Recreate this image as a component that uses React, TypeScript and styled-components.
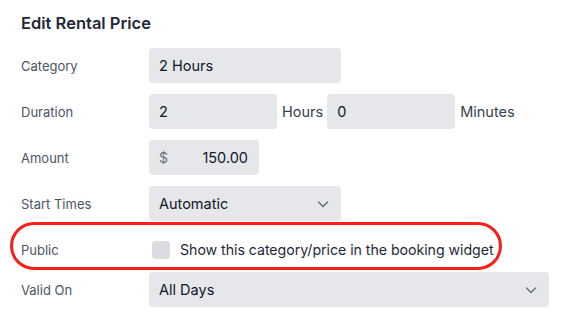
import { createGlobalStyle, styled } from 'styled-components';

const GlobalStyle = createGlobalStyle`
  body {
    margin: 0;
    background: #fff;
    font-family: Inter, 'Noto Sans', sans-serif;
    -webkit-font-smoothing: antialiased;
  }
`;

export default function App() {
  return (
    <>
      <GlobalStyle />
      <Panel>
        <Title>Edit Rental Price</Title>
        <Row>
          <Label>Category</Label>
          <Field $width={192}>2 Hours</Field>
        </Row>
        <Row>
          <Label>Duration</Label>
          <Field $width={128}>2</Field>
          <Unit>Hours</Unit>
          <Field $width={128}>0</Field>
          <Unit>Minutes</Unit>
        </Row>
        <Row>
          <Label>Amount</Label>
          <Field $width={110}>
            <Currency>$</Currency>
            <Amount>150.00</Amount>
          </Field>
        </Row>
        <Row>
          <Label>Start Times</Label>
          <Select $width={192}>
            Automatic
            <Chevron />
          </Select>
        </Row>
        <Row $compact>
          <Highlight />
          <Label>Public</Label>
          <CheckRow>
            <Checkbox />
            Show this category/price in the booking widget
          </CheckRow>
        </Row>
        <Row>
          <Label>Valid On</Label>
          <Select $width={400}>
            All Days
            <Chevron />
          </Select>
        </Row>
      </Panel>
    </>
  );
}

function Chevron() {
  return (
    <ChevronIcon width="14" height="14" viewBox="0 0 14 14" fill="none">
      <path d="M2.5 5l4.5 4.5L11.5 5" stroke="#6b7280" strokeWidth="1.6" strokeLinecap="round" strokeLinejoin="round" />
    </ChevronIcon>
  );
}

const Panel = styled.div`
  padding: 11px 0 0 21px;
`;

const Title = styled.h2`
  margin: 0 0 13px;
  font-size: 16.5px;
  line-height: 24px;
  font-weight: 600;
  color: #1f2937;
`;

const Row = styled.div<{ $compact?: boolean }>`
  position: relative;
  display: flex;
  align-items: center;
  height: 35px;
  margin-bottom: ${({ $compact }) => ($compact ? '5px' : '11px')};
`;

const Label = styled.div`
  width: 128px;
  flex-shrink: 0;
  font-size: 13px;
  color: #4b5563;
`;

const Field = styled.div<{ $width: number }>`
  box-sizing: border-box;
  display: flex;
  align-items: center;
  width: ${({ $width }) => $width}px;
  height: 35px;
  padding: 0 10px;
  background: #e5e7eb;
  border-radius: 4px;
  font-size: 14.5px;
  color: #111827;
`;

const Select = styled(Field)`
  justify-content: space-between;
  padding-right: 11px;
`;

const ChevronIcon = styled.svg`
  display: block;
`;

const Unit = styled.span`
  margin: 0 4px 0 5px;
  font-size: 14.5px;
  color: #374151;
`;

const Currency = styled.span`
  color: #6b7280;
  font-size: 14px;
`;

const Amount = styled.span`
  margin-left: auto;
  padding-right: 1px;
`;

const CheckRow = styled.label`
  display: flex;
  align-items: center;
  gap: 10px;
  margin-left: 3px;
  font-size: 14.2px;
  letter-spacing: -0.05px;
  color: #1f2937;
`;

const Checkbox = styled.span`
  width: 18px;
  height: 18px;
  border-radius: 4px;
  background: #d9dce1;
`;

const Highlight = styled.div`
  position: absolute;
  left: -11px;
  top: -10px;
  width: 492px;
  height: 48px;
  box-sizing: border-box;
  border: 3.5px solid #fb1f1a;
  border-radius: 24px;
  pointer-events: none;
`;
